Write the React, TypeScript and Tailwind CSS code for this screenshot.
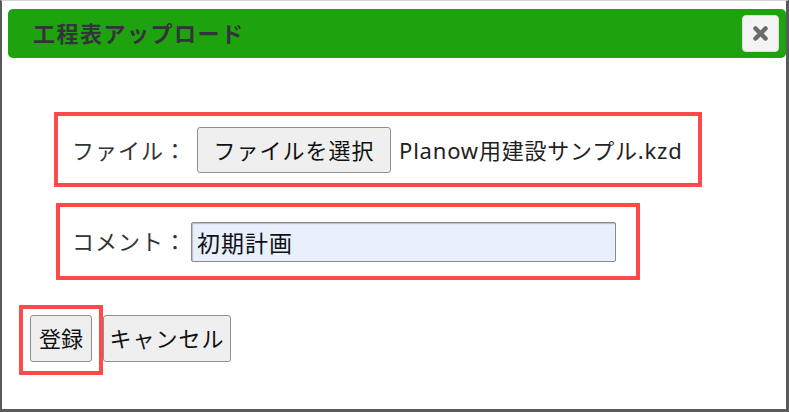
import { useState } from 'react'

const font = { fontFamily: '"Noto Sans", "Noto Sans CJK JP", sans-serif' }

export default function App() {
  const [comment, setComment] = useState('初期計画')

  return (
    <div
      className="w-[789px] h-[412px] bg-white border-t border-t-[#d4d4d4] border-l-2 border-l-[#5a5a5a] border-r-[3px] border-r-[#5a5a5a] border-b-[3px] border-b-[#5a5a5a] text-[#222]"
      style={font}
    >
      {/* Header */}
      <div className="ml-[6px] mt-[8px] h-[49px] rounded-[5px] bg-[#1ea30e] flex items-center justify-between pl-[25px] pr-[7px]">
        <span className="text-[22px] font-bold text-[#33333a] tracking-[1.5px]">工程表アップロード</span>
        <button className="w-[37px] h-[37px] rounded-[4px] bg-[#f3f3f3] border border-[#dcdcdc] flex items-center justify-center">
          <svg width="17" height="17" viewBox="0 0 17 17">
            <path d="M3.5 3.5 L13.5 13.5 M13.5 3.5 L3.5 13.5" stroke="#6b6b6b" strokeWidth="4.5" strokeLinecap="round" />
          </svg>
        </button>
      </div>

      {/* File row */}
      <div className="ml-[52px] mt-[54px] w-[648px] h-[75px] border-4 border-[#ff4a4a] flex items-center pl-[14px] pt-[1px]">
        <span className="text-[22px] text-[#333] tracking-[1px]">ファイル：</span>
        <button className="ml-[10px] h-[46px] w-[194px] rounded-[3px] border border-[#8f8f8f] bg-[#efefef] text-[22px] text-[#111] tracking-[1px]">
          ファイルを選択
        </button>
        <span className="ml-[8px] text-[22px] text-[#222] tracking-[0.8px]">Planow用建設サンプル.kzd</span>
      </div>

      {/* Comment row */}
      <div className="ml-[54px] mt-[16px] w-[584px] h-[77px] border-4 border-[#ff4a4a] flex items-center pl-[12px]">
        <span className="text-[22px] text-[#333] tracking-[1px]">コメント：</span>
        <input
          value={comment}
          onChange={e => setComment(e.target.value)}
          className="ml-[4px] h-[40px] w-[425px] bg-[#e8f0fe] border border-[#8a8a8a] rounded-[2px] px-[5px] text-[23px] text-[#111] tracking-[1px] outline-none shadow-[inset_1px_1px_1px_#bbb]"
          style={font}
        />
      </div>

      {/* Buttons */}
      <div className="ml-[17px] mt-[25px] flex items-start">
        <div className="w-[84px] h-[70px] border-4 border-[#ff4a4a] pl-[7px] pt-[6px]">
          <button className="h-[47px] w-[62px] rounded-[3px] border border-[#8f8f8f] bg-[#efefef] text-[22px] text-[#111]">
            登録
          </button>
        </div>
        <button className="mt-[10px] h-[47px] w-[128px] rounded-[3px] border border-[#8f8f8f] bg-[#efefef] text-[22px] text-[#111] tracking-[1px]">
          キャンセル
        </button>
      </div>
    </div>
  )
}
